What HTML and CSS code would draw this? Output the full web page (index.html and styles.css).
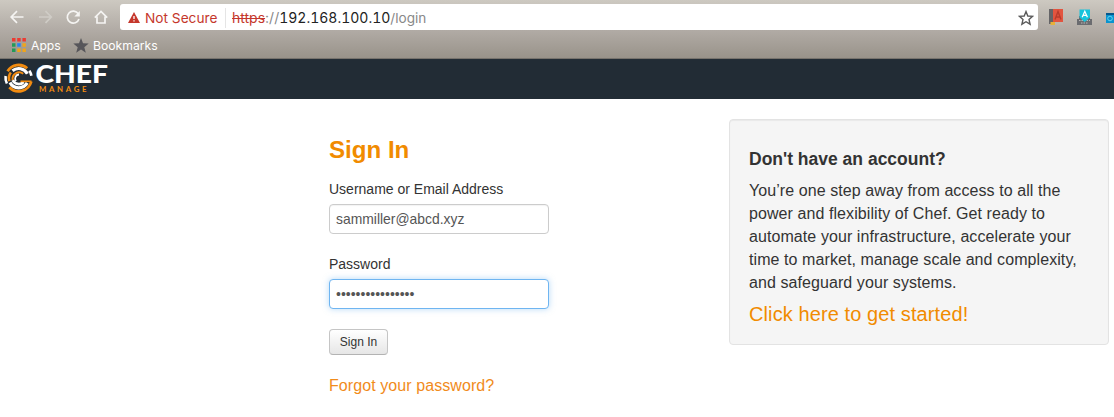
FILE: index.html
```html
<!DOCTYPE html>
<html lang="en">
<head>
<meta charset="utf-8">
<title>Chef Manage</title>
<link rel="stylesheet" href="styles.css">
</head>
<body>
<div class="browser">
  <div class="toolbar">
    <svg class="nav-icons" width="120" height="34" viewBox="0 0 120 34" fill="none" stroke="#f5f4f2" stroke-width="1.7">
      <path d="M23.5 17H11.5M17 11.2L11.2 17L17 22.8"/>
      <path d="M39 17H51M45.5 11.2L51.3 17L45.5 22.8" stroke="#cfccc6"/>
      <path d="M78.3 13.8A6 6 0 1 0 79 19"/>
      <path d="M79.8 11V16.5H74.3Z" fill="#f5f4f2" stroke="none"/>
      <path d="M94.8 17.6L101 11.5L107.2 17.6M97 16.5V23H105V16.5"/>
    </svg>
    <div class="address">
      <svg class="warn" width="12" height="11" viewBox="0 0 12 11"><path d="M6 0L12 11H0Z" fill="#c5372c"/><path d="M6 4V7M6 8.2V9.5" stroke="#fff" stroke-width="1.3"/></svg>
      <span class="not-secure">Not Secure</span>
      <span class="divider"></span>
      <span class="url"><span class="scheme">https</span>://<span class="host">192.168.100.10</span><span class="path">/login</span></span>
      <svg class="star" width="16" height="16" viewBox="0 0 16 16"><path d="M8 1.6L9.8 6L14.6 6.4L11 9.5L12.1 14.2L8 11.7L3.9 14.2L5 9.5L1.4 6.4L6.2 6Z" fill="none" stroke="#5a5a5a" stroke-width="1.4"/></svg>
    </div>
    <svg class="extensions" width="76" height="34" viewBox="0 0 76 34">
      <path d="M11 9H16V24H11Z" fill="#656467"/><path d="M15 9H25V22H15Z" fill="#e2543f"/><path d="M16 22H25V24.5H16Z" fill="#bdb5af"/><path d="M12.5 22H17V25H12.5Z" fill="#e6b13a"/>
      <path d="M17 19.5L20 11.5L23 19.5M18 17H22" fill="none" stroke="#b83b2c" stroke-width="1.4"/>
      <path d="M41 16H52V19H54V25H39V19H41Z" fill="#6b6c70"/><path d="M41 20.5H52M43 23H50" stroke="#b8b8b8" stroke-dasharray="1.5 1"/><path d="M41.5 9.5H52V17.5L46.7 22L41.5 17.5Z" fill="#17c3dc"/><path d="M44.2 17.3L46.8 11.3L49.4 17.3M45.2 15.4H48.4" fill="none" stroke="#fff" stroke-width="1.3"/>
      <path d="M68 13H76V23H68Z" fill="#0993cf"/><path d="M68 13H76V15H68Z" fill="#07588c"/><circle cx="72" cy="18.5" r="2.3" fill="none" stroke="#65d3f1"/>
    </svg>
  </div>
  <div class="bookmarks">
    <svg class="apps" width="14" height="14" viewBox="0 0 14 14"><path d="M0 0H3.5V3.5H0ZM5.2 0H8.7V3.5H5.2ZM10.4 0H13.9V3.5H10.4Z" fill="#eb3b32"/><path d="M0 5.2H3.5V8.7H0ZM0 10.4H3.5V13.9H0Z" fill="#239b58"/><path d="M5.2 5.2H8.7V8.7H5.2Z" fill="#2784f0"/><path d="M10.4 5.2H13.9V8.7H10.4ZM5.2 10.4H8.7V13.9H5.2ZM10.4 10.4H13.9V13.9H10.4Z" fill="#efa51b"/></svg>
    <span class="apps-label">Apps</span>
    <svg class="solid-star" width="16" height="15" viewBox="0 0 16 15"><path d="M8 0L10 5.3L15.7 5.6L11.3 9.2L12.8 14.7L8 11.6L3.2 14.7L4.7 9.2L.3 5.6L6 5.3Z" fill="#57565a"/></svg>
    <span>Bookmarks</span>
  </div>
</div>
<header class="header">
  <svg class="logo" width="116" height="40" viewBox="0 0 116 40">
    <g fill="none">
      <path d="M7.6 12.2A13 13 0 0 1 27.2 9.2M31.3 22.5A13 13 0 0 1 9.3 28.2" stroke="#f18b10" stroke-width="2.8"/>
      <path d="M5.6 17A13 13 0 0 0 6.9 24.5M29.4 11.6A13 13 0 0 1 31.4 16.8" stroke="#fff" stroke-width="2.6"/>
      <path d="M12.5 11.8A9.8 9.8 0 0 1 27.4 14.7M27.2 23.9A9.8 9.8 0 0 1 10 23.5" stroke="#fff" stroke-width="3.2"/>
      <path d="M10.8 13.4A9.8 9.8 0 0 0 9.4 22.2" stroke="#f18b10" stroke-width="2.6"/>
      <path d="M23.2 14.7A6.6 6.6 0 0 0 12.7 21.2" stroke="#f18b10" stroke-width="2"/>
      <path d="M12.8 21.2A6.6 6.6 0 0 0 23.6 23" stroke="#fff" stroke-width="2.8"/>
      <path d="M19 15.5A4 4 0 0 0 16 22" stroke="#fff" stroke-width="1.8"/>
      <path d="M20.5 22.3H31.5" stroke="#f18b10" stroke-width="1.7"/>
    </g>
    <text class="brand" x="35.5" y="24.3" textLength="72.5" lengthAdjust="spacingAndGlyphs">CHEF</text>
    <text class="product" x="39" y="33.3" textLength="47.5">MANAGE</text>
  </svg>
</header>
<main class="content">
  <form class="signin">
    <h1>Sign In</h1>
    <label for="user">Username or Email Address</label>
    <input class="field" id="user" type="text" value="sammiller@abcd.xyz">
    <label for="password">Password</label>
    <div class="field focused" id="password">••••••••••••••••</div>
    <button type="button">Sign In</button>
    <a class="forgot">Forgot your password?</a>
  </form>
  <aside class="card">
    <h2>Don't have an account?</h2>
    <p>You’re one step away from access to all the<br>power and flexibility of Chef. Get ready to<br>automate your infrastructure, accelerate your<br>time to market, manage scale and complexity,<br>and safeguard your systems.</p>
    <a class="start">Click here to get started!</a>
  </aside>
</main>
</body>
</html>
```
FILE: styles.css
```css
* { box-sizing: border-box; }
body { margin: 0; height: 417px; overflow: hidden; background: #fff; color: #333; font-family: "Liberation Sans", Arial, sans-serif; }
svg { display: block; flex: none; }
.browser { height: 59px; background: linear-gradient(#cdc9c1, #b1aba5 52%, #99938a); border-bottom: 1px solid #77736d; font-family: Inter, sans-serif; }
.toolbar { display: flex; height: 34px; }
.address { display: flex; align-items: center; width: 918px; height: 26px; margin-top: 4px; padding: 1px 4px 0 8px; border-radius: 3px; background: #fff; font-size: 14px; white-space: nowrap; }
.not-secure { width: 72px; margin-left: 5px; color: #c5372c; font-size: 13.7px; }
.divider { width: 1px; height: 20px; margin: 0 6px 0 8px; background: #e5e5e5; }
.url { color: #888; font-size: 14px; }
.scheme { color: #c5372c; text-decoration: line-through; }
.host { color: #222; font-variant-numeric: tabular-nums; }
.path { font-size: 13.6px; }
.star { margin-left: auto; }
.bookmarks { display: flex; align-items: center; height: 22px; padding-left: 12px; color: #fff; font-size: 12.2px; }
.apps-label { width: 43px; margin-left: 5px; }
.solid-star { margin: 0 4px 0 -1px; }
.header { height: 40px; background: #222c35; }
.brand { fill: #fff; font: 900 24.5px Lato, sans-serif; }
.product { fill: #f18b10; font: bold 7.8px Lato, sans-serif; }
.content { display: flex; padding-left: 329px; }
.signin { display: flex; flex-direction: column; align-items: flex-start; width: 400px; padding-top: 36px; }
h1 { margin: 0 0 14px; color: #f18b00; font-size: 24.1px; line-height: 30px; }
label { margin-bottom: 5px; font-size: 14px; line-height: 20px; }
.field { width: 220px; height: 30px; margin: 0 0 20px; padding: 4px 6px; border: 1px solid #ccc; border-radius: 4px; color: #555; background: #fff; font: 13.9px/20px "Liberation Sans", Arial, sans-serif; outline: none; box-shadow: inset 0 1px 1px #0000000d; }
.focused { border-color: #6fb5f1; box-shadow: 0 0 6px #6fb5f180; font-size: 14px; }
button { width: 59px; height: 26px; padding: 0; border: 1px solid #c5c5c5; border-bottom-color: #b3b3b3; border-radius: 4px; color: #333; background: linear-gradient(#fff, #e6e6e6); font: 12px/20px "Liberation Sans", Arial, sans-serif; }
.forgot { margin-top: 21px; color: #f18b1b; font-size: 16px; letter-spacing: .08px; line-height: 20px; }
.card { width: 380px; height: 226px; margin-top: 20px; padding: 29px 19px; border: 1px solid #e3e3e3; border-radius: 4px; background: #f5f5f5; box-shadow: inset 0 1px 1px #0000000d; white-space: nowrap; }
h2 { margin: 0 0 10px; font-size: 17.5px; line-height: 20px; }
p { margin: 0 0 8px; font-size: 16px; letter-spacing: .08px; line-height: 23px; }
.start { display: block; color: #f18b00; font-size: 20px; letter-spacing: .1px; line-height: 24px; }
```
